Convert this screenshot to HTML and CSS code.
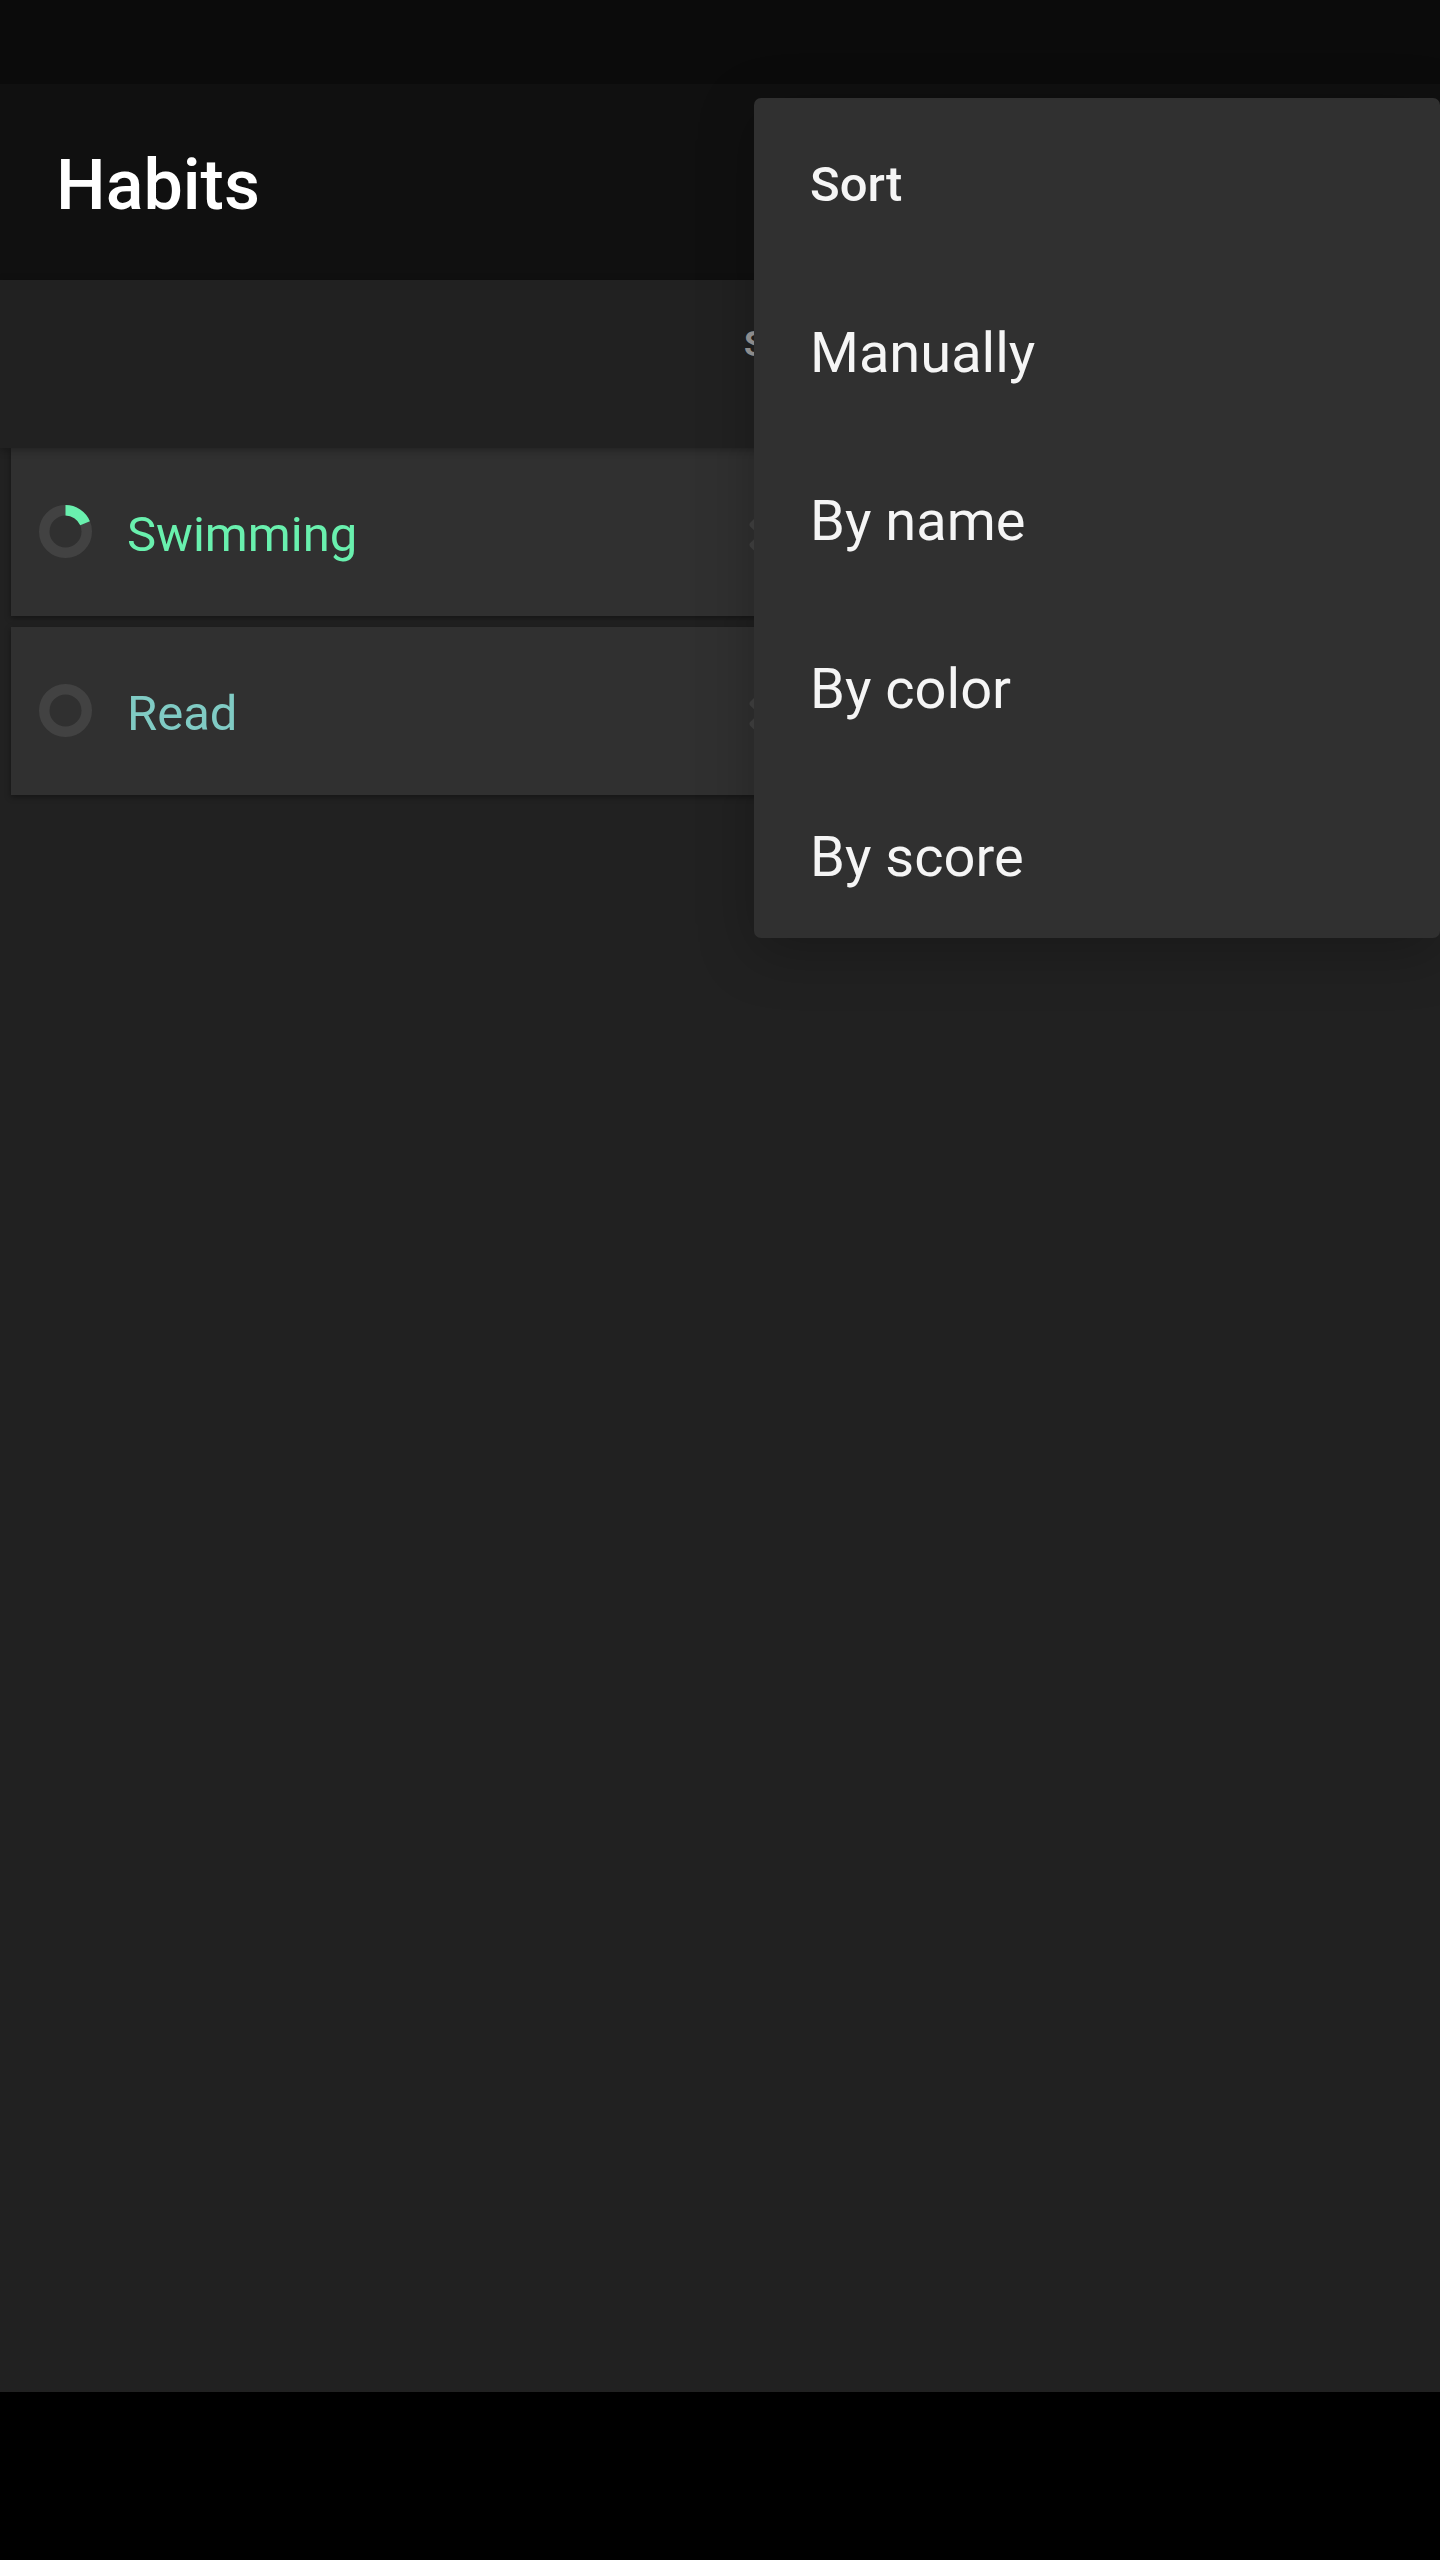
FILE: index.html
```html
<!DOCTYPE html>
<html lang="en">
<head>
<meta charset="utf-8">
<meta name="viewport" content="width=device-width, initial-scale=1">
<title>Habits</title>
<link rel="stylesheet" href="styles.css">
</head>
<body>
<div class="app">
  <div class="status-bar"></div>
  <header class="toolbar">
    <h1 class="toolbar-title">Habits</h1>
  </header>
  <div class="day-header">
    <span class="day">S</span>
  </div>
  <main class="content">
    <ul class="habits">
      <li class="habit habit-green">
        <svg class="ring" viewBox="0 0 53 53" aria-hidden="true">
          <circle class="ring-track" cx="26.5" cy="26.5" r="21.25"/>
          <circle class="ring-value" cx="26.5" cy="26.5" r="21.25" pathLength="100" stroke-dasharray="18.6 100" transform="rotate(-90 26.5 26.5)"/>
        </svg>
        <span class="habit-name">Swimming</span>
        <svg class="mark" viewBox="0 0 1792 1792" aria-hidden="true"><path d="M1490 1322q0 40-28 68l-136 136q-28 28-68 28t-68-28l-294-294-294 294q-28 28-68 28t-68-28l-136-136q-28-28-28-68t28-68l294-294-294-294q-28-28-28-68t28-68l136-136q28-28 68-28t68 28l294 294 294-294q28-28 68-28t68 28l136 136q28 28 28 68t-28 68l-294 294 294 294q28 28 28 68z"/></svg>
      </li>
      <li class="habit habit-teal">
        <svg class="ring" viewBox="0 0 53 53" aria-hidden="true">
          <circle class="ring-track" cx="26.5" cy="26.5" r="21.25"/>
        </svg>
        <span class="habit-name">Read</span>
        <svg class="mark" viewBox="0 0 1792 1792" aria-hidden="true"><path d="M1490 1322q0 40-28 68l-136 136q-28 28-68 28t-68-28l-294-294-294 294q-28 28-68 28t-68-28l-136-136q-28-28-28-68t28-68l294-294-294-294q-28-28-28-68t28-68l136-136q28-28 68-28t68 28l294 294 294-294q28-28 68-28t68 28l136 136q28 28 28 68t-28 68l-294 294 294 294q28 28 28 68z"/></svg>
      </li>
    </ul>
  </main>
  <div class="navigation-bar"></div>
  <section class="menu" aria-labelledby="menu-title">
    <h2 class="menu-title" id="menu-title">Sort</h2>
    <button class="menu-item" type="button">Manually</button>
    <button class="menu-item" type="button">By name</button>
    <button class="menu-item" type="button">By color</button>
    <button class="menu-item" type="button">By score</button>
  </section>
</div>
</body>
</html>
```
FILE: styles.css
```css
* {
  box-sizing: border-box;
}

body {
  margin: 0;
  background: #212121;
  font-family: Roboto, sans-serif;
}

.app {
  position: relative;
  display: flex;
  flex-direction: column;
  min-height: 100vh;
  overflow: hidden;
}

.status-bar {
  height: 84px;
  background: #0b0b0b;
}

.toolbar {
  display: flex;
  align-items: center;
  height: 196px;
  padding: 6px 56px 0;
  background: #101010;
}

.toolbar-title {
  margin: 0;
  color: #fff;
  font-size: 70px;
  font-weight: 500;
  line-height: 84px;
}

/* Day column labels, aligned with the marks of each habit */
.day-header {
  z-index: 1;
  display: grid;
  grid-template-columns: 1fr 688px;
  height: 168px;
  padding: 44px 11px 0;
  background: #212121;
  box-shadow: 0 2px 8px rgba(0, 0, 0, 0.3);
}

.day {
  grid-column: 2;
  padding-left: 3px;
  color: #9e9e9e;
  font-size: 35px;
  font-weight: 700;
  line-height: 42px;
}

.content {
  flex: 1;
}

.habits {
  display: flex;
  flex-direction: column;
  gap: 11px;
  margin: 0;
  padding: 0 11px;
  list-style: none;
}

.habit {
  display: grid;
  grid-template-columns: 53px 1fr 688px;
  column-gap: 35px;
  align-items: center;
  height: 168px;
  padding-left: 28px;
  background: #303030;
  box-shadow: 0 2px 6px rgba(0, 0, 0, 0.4);
}

.habit-green {
  color: #69f0ae;
}

.habit-teal {
  color: #80cbc4;
}

.ring {
  width: 53px;
  height: 53px;
  margin-bottom: 2px;
  fill: none;
  stroke-width: 10.5;
}

.ring-track {
  stroke: #424242;
}

.ring-value {
  stroke: currentColor;
}

.habit-name {
  padding-top: 6px;
  font-size: 49px;
  line-height: 58px;
}

.mark {
  width: 50px;
  height: 50px;
  margin-top: 2px;
  fill: #424242;
}

.navigation-bar {
  height: 168px;
  background: #000;
}

.menu {
  position: absolute;
  top: 98px;
  right: 0;
  display: flex;
  flex-direction: column;
  width: 686px;
  max-width: 100%;
  z-index: 2;
  border-radius: 7px;
  background: #303030;
  box-shadow: 0 14px 56px rgba(0, 0, 0, 0.25);
}

.menu-title,
.menu-item {
  height: 168px;
  margin: 0;
  padding: 6px 56px 0;
  border: 0;
  background: none;
  color: #f5f5f5;
  font-family: inherit;
  text-align: left;
}

.menu-title {
  font-size: 49px;
  font-weight: 500;
  line-height: 162px;
}

.menu-item {
  font-size: 56px;
  font-weight: 400;
  line-height: 66px;
}
```
